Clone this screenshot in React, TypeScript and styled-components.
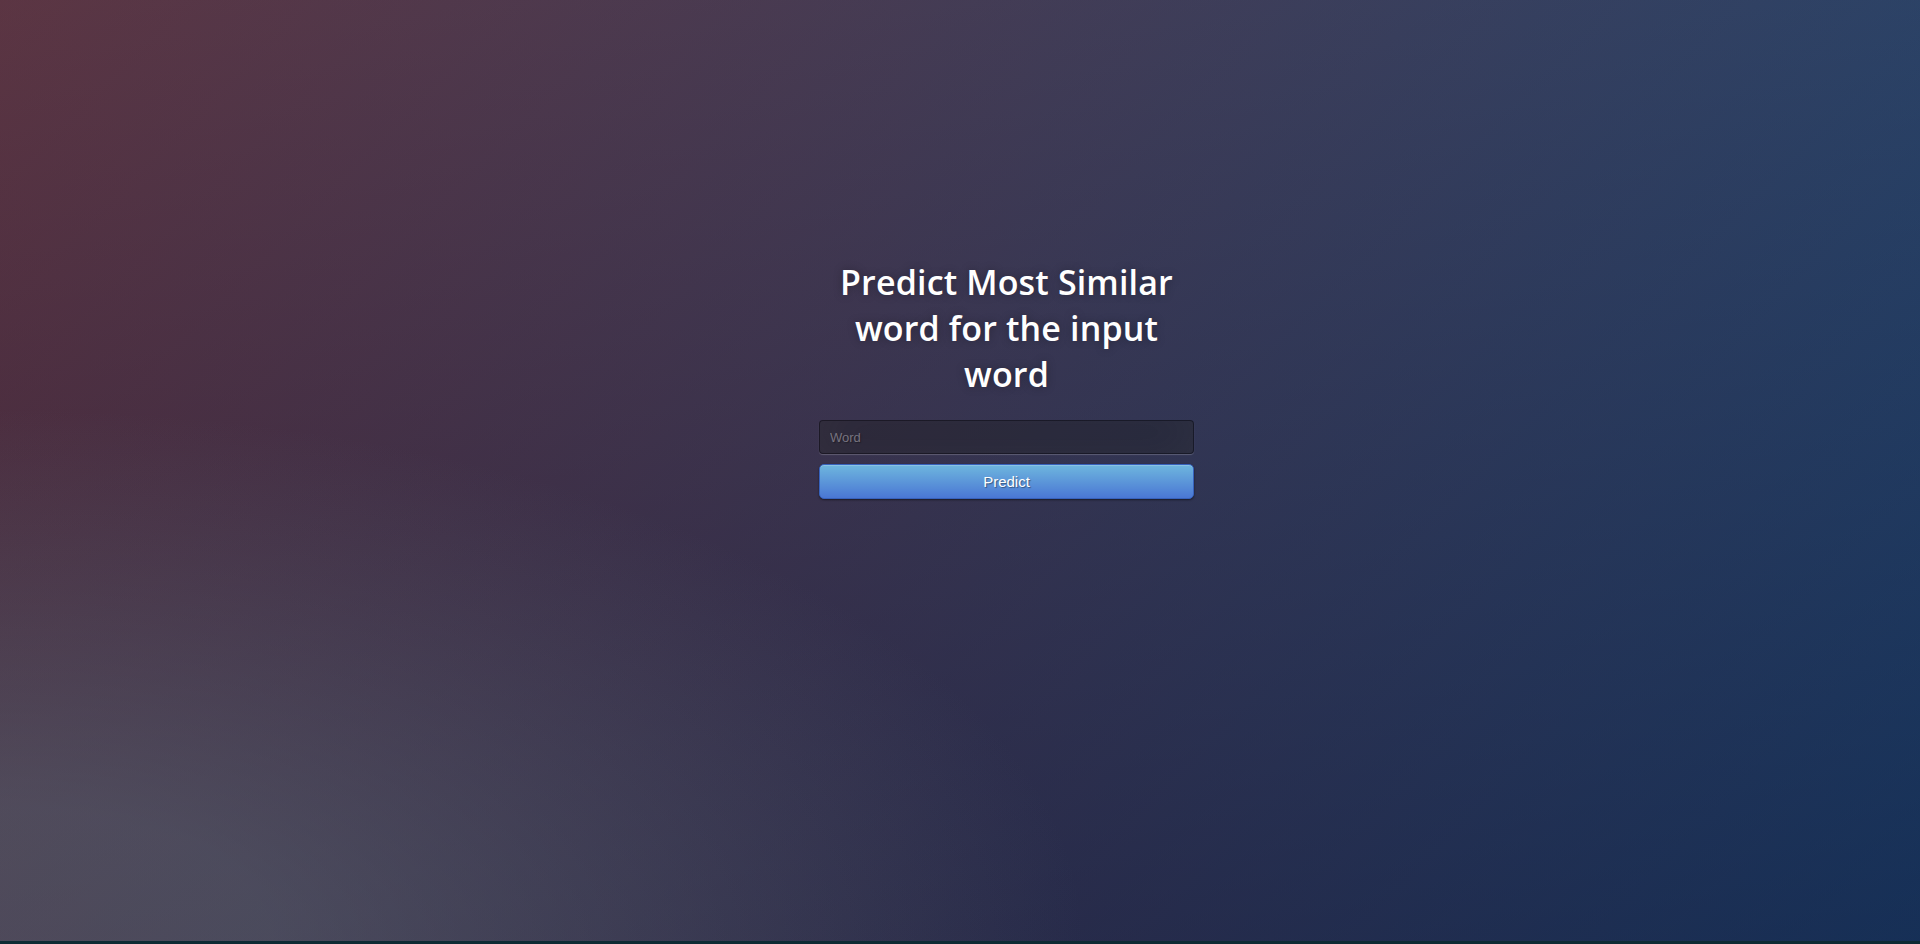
import React from "react";
import styled, { createGlobalStyle } from "styled-components";

const Global = createGlobalStyle`
  html {
    margin: 0;
    height: 100%;
    background: #0e2b34;
    overflow: hidden;
  }
  body {
    margin: 0;
    height: 941px;
    font-family: "Open Sans", sans-serif;
    background: #092756;
    background:
      radial-gradient(ellipse farthest-corner at 0% 100%, rgba(104,128,138,0.4) 10%, rgba(138,114,76,0) 40%),
      linear-gradient(to bottom, rgba(57,173,219,0.25) 0%, rgba(42,60,87,0.4) 100%),
      linear-gradient(135deg, #670d10 0%, #092756 100%);
  }
  #root { height: 100%; }
  * { box-sizing: border-box; }
`;

const Page = styled.main`
  height: 100%;
  display: flex;
  justify-content: center;
  align-items: flex-start;
  padding: 236px 0 0 93px;
`;

const Panel = styled.form`
  width: 375px;
  display: flex;
  flex-direction: column;
`;

const Title = styled.h1`
  margin: 23px 0 23px;
  font-family: "Open Sans", sans-serif;
  font-weight: 600;
  font-size: 34px;
  line-height: 46px;
  color: #fff;
  text-align: center;
  letter-spacing: 0.15px;
  text-shadow: 0 0 10px rgba(0, 0, 0, 0.3);
`;

const Input = styled.input`
  width: 100%;
  height: 34px;
  margin: 0 0 10px;
  padding: 0 10px;
  font-family: "Liberation Sans", Arial, sans-serif;
  font-size: 13px;
  color: #fff;
  text-shadow: 1px 1px 1px rgba(0, 0, 0, 0.3);
  background: rgba(0, 0, 0, 0.3);
  border: 1px solid rgba(0, 0, 0, 0.3);
  border-radius: 4px;
  outline: none;
  box-shadow: inset 0 -5px 45px rgba(100, 100, 100, 0.2), 0 1px 1px rgba(255, 255, 255, 0.2);
  &::placeholder {
    color: #77737f;
  }
`;

const Button = styled.button`
  width: 100%;
  height: 35px;
  padding: 0 14px;
  font-family: "Liberation Sans", Arial, sans-serif;
  font-size: 15px;
  color: #fff;
  text-align: center;
  text-shadow: 1px 1px 1px rgba(0, 0, 0, 0.4);
  background-color: #4a77d4;
  background-image: linear-gradient(to bottom, #6eb6de, #4a77d4);
  border: 1px solid #3762bc;
  border-radius: 5px;
  box-shadow: inset 0 1px 0 rgba(255, 255, 255, 0.2), 0 1px 2px rgba(0, 0, 0, 0.5);
  cursor: pointer;
`;

export default function App() {
  return (
    <>
      <Global />
      <Page>
        <Panel onSubmit={(e) => e.preventDefault()}>
          <Title>Predict Most Similar word for the input word</Title>
          <Input type="text" name="word" placeholder="Word" />
          <Button type="submit">Predict</Button>
        </Panel>
      </Page>
    </>
  );
}
